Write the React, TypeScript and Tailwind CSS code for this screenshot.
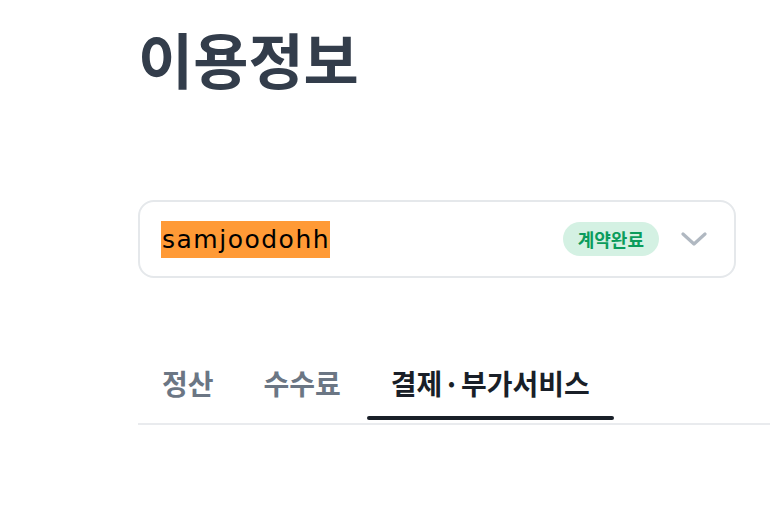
import React from 'react';

const tabs = [
  { label: ['결제', '부가서비스'], active: true },
];

export default function App() {
  const tabCls = (active: boolean) =>
    `text-[28px] leading-[32px] font-bold whitespace-nowrap ${active ? 'text-[#191f28]' : 'text-[#6b7684]'}`;

  return (
    <div className="min-h-screen bg-white font-['Noto_Sans_CJK_KR',sans-serif]">
      <div className="pl-[138px] pt-[22px]">
        <h1 className="text-[60px] leading-[72px] font-bold text-[#333d4b]">이용정보</h1>

        {/* 계정 선택 카드 */}
        <div className="mt-[106px] w-[598px] h-[78px] rounded-2xl border-2 border-[#e5e8eb] flex items-center pl-[21px] pr-[27px]">
          <span className="bg-[#ff9a36] text-black font-['DejaVu_Sans',sans-serif] text-[25px] leading-[37px] tracking-[1.5px] pl-[1px]">
            samjoodohh
          </span>
          <div className="flex-1" />
          <span className="h-[34px] px-[15px] rounded-full bg-[#d4f1e3] text-[#0b9c5c] text-[18px] font-bold flex items-center">
            계약완료
          </span>
          <svg className="ml-[22px]" width="26" height="14" viewBox="0 0 26 14" fill="none">
            <polyline points="2,2 13,12 24,2" stroke="#b0b8c1" strokeWidth="3.2" strokeLinecap="round" strokeLinejoin="round" />
          </svg>
        </div>

        {/* 탭 */}
        <div className="mt-[89px] flex gap-[2px] border-b-2 border-[#e9ebee]">
          {['정산', '수수료'].map((label) => (
            <button key={label} type="button" className="px-6 flex flex-col items-stretch cursor-pointer">
              <span className={tabCls(false)}>{label}</span>
              <span className="mt-[17px] h-[4px]" />
              <span className="h-[3px]" />
            </button>
          ))}
          {tabs.map((t) => (
            <button key={t.label.join('')} type="button" className="px-6 flex flex-col items-stretch cursor-pointer">
              <span className={tabCls(t.active)}>
                {t.label[0]}
                <span className="mx-[1px]">·</span>
                {t.label[1]}
              </span>
              <span className="mt-[17px] h-[4px] -mx-6 rounded-full bg-[#191f28]" />
              <span className="h-[3px]" />
            </button>
          ))}
        </div>
      </div>
    </div>
  );
}
